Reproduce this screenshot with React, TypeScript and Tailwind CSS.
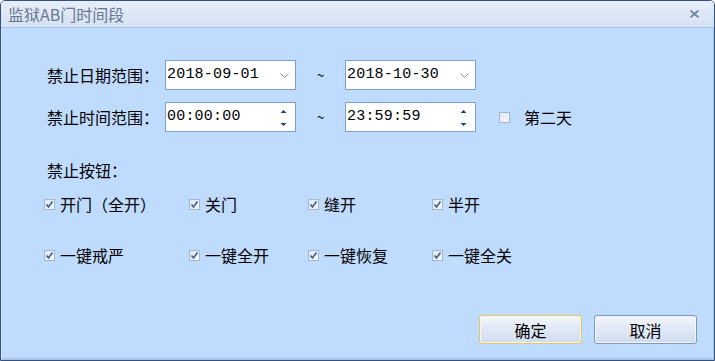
import React from 'react'

const font = { fontFamily: '"SimSun", "Noto Sans CJK SC", sans-serif' }

function Chevron() {
  return (
    <svg width="9" height="6" viewBox="0 0 9 6" className="absolute right-[6px] top-[12px]">
      <path d="M0.5 0.5 L4.5 4.5 L8.5 0.5" fill="none" stroke="#8a8a8a" strokeWidth="1" />
    </svg>
  )
}

function Spinner() {
  return (
    <svg width="7" height="22" viewBox="0 0 7 22" className="absolute right-[8px] top-[4px]">
      <path d="M3.5 3 L6.5 6 L0.5 6 Z" fill="#1f3f7a" />
      <path d="M0.5 16 L6.5 16 L3.5 19 Z" fill="#1f3f7a" />
    </svg>
  )
}

function Box({ value, kind }: { value: string; kind: 'date' | 'time' }) {
  return (
    <div className="relative w-[131px] h-[30px] bg-white border border-[#7c9fd3] flex items-center pl-[1px]">
      <span className="text-[15px] text-black tracking-[0.2px]" style={{ fontFamily: '"Liberation Mono", monospace' }}>
        {value}
      </span>
      {kind === 'date' ? <Chevron /> : <Spinner />}
    </div>
  )
}

function Check({ checked = true }: { checked?: boolean }) {
  return (
    <div className="w-[11px] h-[11px] border border-[#a3b6cf] bg-gradient-to-br from-[#dfe6ef] to-[#f8fafc] flex items-center justify-center shrink-0">
      {checked && (
        <svg width="9" height="9" viewBox="0 0 9 9">
          <path d="M1.5 4.5 L3.5 7 L7.5 1.5" fill="none" stroke="#3b5c92" strokeWidth="1.6" />
        </svg>
      )}
    </div>
  )
}

function Item({ label, w }: { label: string; w: string }) {
  return (
    <div className={`flex items-center gap-[5px] ${w}`}>
      <Check />
      <span className="text-[16px] text-black leading-none">{label}</span>
    </div>
  )
}

export default function App() {
  return (
    <div className="w-[715px] h-[361px] bg-white" style={font}>
      <div className="w-full h-full flex flex-col border border-[#34527e] rounded-t-[5px] overflow-hidden bg-[#bfdbfd]">
        {/* title bar */}
        <div className="h-[27px] shrink-0 flex items-center justify-between pl-[7px] pr-[14px] bg-gradient-to-b from-[#e6eef9] to-[#d4e2f4] border-b border-[#a7c3e8]">
          <span className="text-[16px] text-[#6a7890] leading-none">监狱AB门时间段</span>
          <svg width="11" height="10" viewBox="0 0 11 10">
            <path d="M1.5 1.5 L9.5 8.5 M9.5 1.5 L1.5 8.5" stroke="#ffffff" strokeWidth="2.6" transform="translate(0 0.6)" />
            <path d="M1.5 1.5 L9.5 8.5 M9.5 1.5 L1.5 8.5" stroke="#7487a6" strokeWidth="2" />
          </svg>
        </div>

        {/* body */}
        <div className="flex-1 flex flex-col border-b-2 border-[#a9c4e6] border-l border-r border-l-[#d8e7fb] border-r-[#a9c4e6]">
          <div className="pl-[45px] pt-[32px] flex flex-col gap-[12px]">
            <div className="flex items-center">
              <span className="w-[118px] text-[16px] text-black">禁止日期范围：</span>
              <Box value="2018-09-01" kind="date" />
              <span className="w-[49px] text-center text-[13px] text-black">~</span>
              <Box value="2018-10-30" kind="date" />
            </div>
            <div className="flex items-center">
              <span className="w-[118px] text-[16px] text-black">禁止时间范围：</span>
              <Box value="00:00:00" kind="time" />
              <span className="w-[49px] text-center text-[13px] text-black">~</span>
              <Box value="23:59:59" kind="time" />
              <div className="ml-[23px] flex items-center gap-[14px]">
                <Check checked={false} />
                <span className="text-[16px] text-black leading-none">第二天</span>
              </div>
            </div>
          </div>

          <div className="pl-[45px] mt-[30px] text-[16px] text-black leading-none">禁止按钮：</div>

          <div className="pl-[42px] mt-[18px] flex flex-col gap-[35px]">
            <div className="flex">
              <Item label="开门（全开）" w="w-[145px]" />
              <Item label="关门" w="w-[119px]" />
              <Item label="缝开" w="w-[124px]" />
              <Item label="半开" w="w-[120px]" />
            </div>
            <div className="flex">
              <Item label="一键戒严" w="w-[145px]" />
              <Item label="一键全开" w="w-[119px]" />
              <Item label="一键恢复" w="w-[124px]" />
              <Item label="一键全关" w="w-[120px]" />
            </div>
          </div>

          <div className="mt-auto mb-[14px] mr-[16px] flex justify-end gap-[12px]">
            <button className="w-[103px] h-[29px] rounded-[3px] border border-[#e5c56a] bg-gradient-to-b from-[#f3f6fb] via-[#dfe8f5] to-[#cfdcef] text-[16px] text-black shadow-[inset_0_0_0_1px_#fff7dc]">
              确定
            </button>
            <button className="w-[103px] h-[29px] rounded-[3px] border border-[#7d98c0] bg-gradient-to-b from-[#f3f6fb] via-[#dfe8f5] to-[#cfdcef] text-[16px] text-black shadow-[inset_0_0_0_1px_#f5f9ff]">
              取消
            </button>
          </div>
        </div>
      </div>
    </div>
  )
}
